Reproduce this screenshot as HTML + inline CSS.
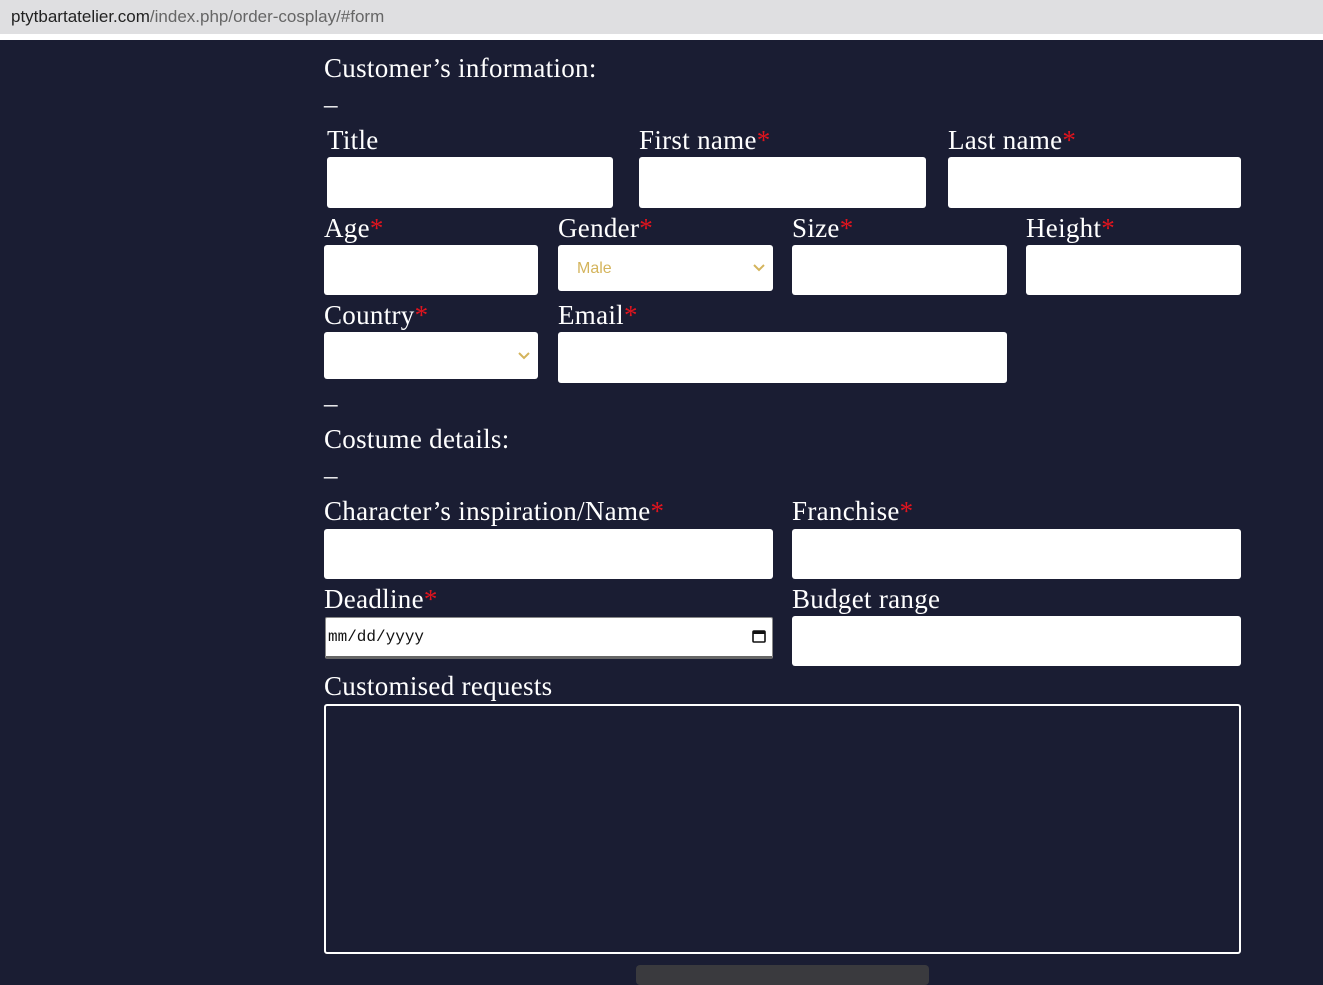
<!DOCTYPE html>
<html><head><meta charset="utf-8"><style>
*{margin:0;padding:0;box-sizing:border-box}
body{width:1323px;height:973px;overflow:hidden;background:#1a1d33;position:relative;font-family:"Liberation Serif",serif;color:#fff}
.bar{position:absolute;left:0;top:0;width:1323px;height:34px;background:#dfdfe1;font-family:"Liberation Sans",sans-serif;font-size:17px;color:#666;padding:7px 0 0 11px}
.bar b{font-weight:normal;color:#222}
.strip{position:absolute;left:0;top:34px;width:1323px;height:6px;background:#fff}
.t{position:absolute;font-size:27px;line-height:30px;white-space:nowrap;letter-spacing:0.3px}
.t i{color:#e0141e;font-style:normal}
.in{position:absolute;background:#fff;border-radius:3px}
.sel svg{position:absolute;right:8px;top:50%;margin-top:-4px}
</style></head><body>
<div class="bar"><b>ptytbartatelier.com</b>/index.php/order-cosplay/#form</div>
<div class="strip"></div>
<div class="t" style="left:324px;top:53px">Customer’s information:</div>
<div class="t" style="left:324px;top:89px">–</div>
<div class="t" style="left:327px;top:125px">Title</div>
<div class="t" style="left:639px;top:125px">First name<i>*</i></div>
<div class="t" style="left:948px;top:125px">Last name<i>*</i></div>
<div class="in" style="left:327px;top:157px;width:286px;height:51px"></div>
<div class="in" style="left:639px;top:157px;width:287px;height:51px"></div>
<div class="in" style="left:948px;top:157px;width:293px;height:51px"></div>
<div class="t" style="left:324px;top:213px">Age<i>*</i></div>
<div class="t" style="left:558px;top:213px">Gender<i>*</i></div>
<div class="t" style="left:792px;top:213px">Size<i>*</i></div>
<div class="t" style="left:1026px;top:213px">Height<i>*</i></div>
<div class="in" style="left:324px;top:245px;width:214px;height:50px"></div>
<div class="in sel" style="left:558px;top:245px;width:215px;height:46px;font-family:'Liberation Sans',sans-serif;font-size:16px;color:#d4b45c;padding:15px 0 0 19px">Male<svg width="12" height="8" viewBox="0 0 12 8"><path d="M1 1l5 5 5-5" stroke="#d4b45c" stroke-width="2" fill="none"/></svg></div>
<div class="in" style="left:792px;top:245px;width:215px;height:50px"></div>
<div class="in" style="left:1026px;top:245px;width:215px;height:50px"></div>
<div class="t" style="left:324px;top:300px">Country<i>*</i></div>
<div class="t" style="left:558px;top:300px">Email<i>*</i></div>
<div class="in sel" style="left:324px;top:332px;width:214px;height:47px"><svg width="12" height="8" viewBox="0 0 12 8"><path d="M1 1l5 5 5-5" stroke="#d4b45c" stroke-width="2" fill="none"/></svg></div>
<div class="in" style="left:558px;top:332px;width:449px;height:51px"></div>
<div class="t" style="left:324px;top:388px">–</div>
<div class="t" style="left:324px;top:424px">Costume details:</div>
<div class="t" style="left:324px;top:460px">–</div>
<div class="t" style="left:324px;top:496px">Character’s inspiration/Name<i>*</i></div>
<div class="t" style="left:792px;top:496px">Franchise<i>*</i></div>
<div class="in" style="left:324px;top:529px;width:449px;height:50px"></div>
<div class="in" style="left:792px;top:529px;width:449px;height:50px"></div>
<div class="t" style="left:324px;top:584px">Deadline<i>*</i></div>
<div class="t" style="left:792px;top:584px">Budget range</div>
<div class="in" style="left:325px;top:617px;width:448px;height:42px;border-radius:2px;border:1px solid #888;border-bottom:3px solid #666;font-family:'Liberation Mono',monospace;font-size:16px;color:#111;padding:10px 0 0 2px">mm/dd/yyyy<svg style="position:absolute;right:6px;top:11px" width="14" height="14" viewBox="0 0 14 14"><rect x="1" y="2" width="12" height="11" rx="1" stroke="#111" stroke-width="1.6" fill="none"/><rect x="1" y="2" width="12" height="3" fill="#111"/></svg></div>
<div class="in" style="left:792px;top:616px;width:449px;height:50px"></div>
<div class="t" style="left:324px;top:671px">Customised requests</div>
<div style="position:absolute;left:324px;top:704px;width:917px;height:250px;border:2px solid #fff;border-radius:3px"></div>
<div style="position:absolute;left:636px;top:965px;width:293px;height:20px;background:#3a3a3e;border-radius:4px"></div>
</body></html>
